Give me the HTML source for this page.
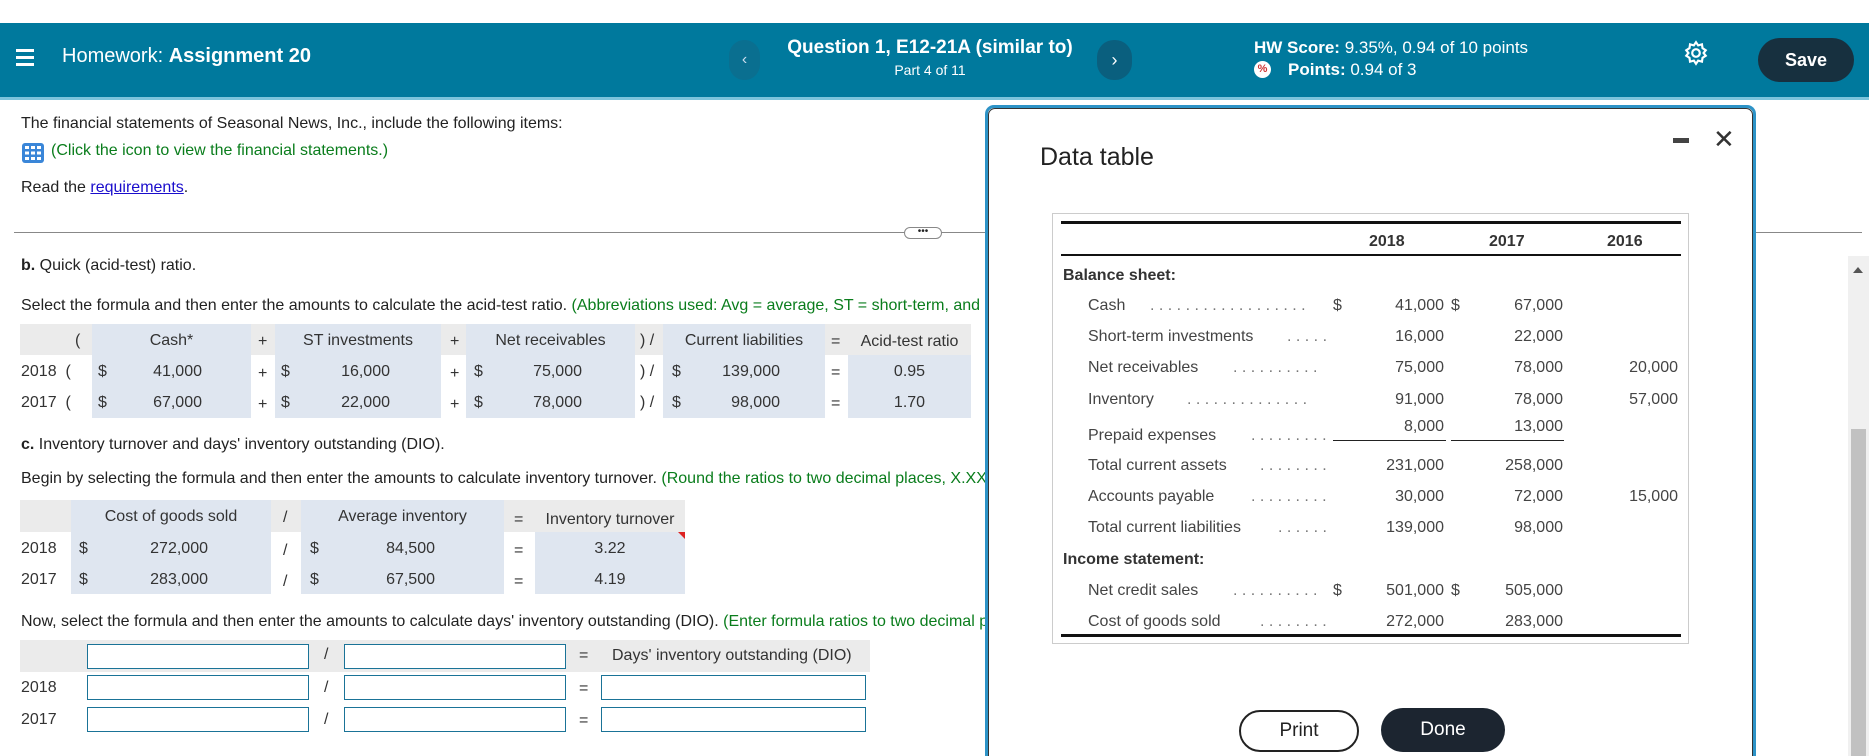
<!DOCTYPE html>
<html><head><meta charset="utf-8"><style>
*{margin:0;padding:0;box-sizing:border-box}
html,body{width:1869px;height:756px;overflow:hidden}
body{background:#fff;font-family:"Liberation Sans",Arial,sans-serif;font-size:16px;color:#222;position:relative}
.a{position:absolute;white-space:nowrap}
.g{color:#0a7d1c}
.hdr{position:absolute;left:0;top:23px;width:1869px;height:77px;background:#00799d;border-bottom:3px solid #7cc4dc;color:#fff}
.bx{position:absolute}
.gray{background:#ebebeb}
.blue{background:#dfe6f0}
.c{text-align:center}
.r{text-align:right}
.in{position:absolute;border:1px solid #1a7397;background:#fff;height:25px}
.m{font-size:16px;color:#333}
</style></head><body>
<div class="hdr">
 <div class="a" style="left:16px;top:26px;width:18px;height:3px;background:#fff"></div>
 <div class="a" style="left:16px;top:33px;width:18px;height:3px;background:#fff"></div>
 <div class="a" style="left:16px;top:40px;width:18px;height:3px;background:#fff"></div>
 <div class="a" style="left:62px;top:22px;font-size:20px">Homework: <b>Assignment 20</b></div>
 <div class="a" style="left:729px;top:17px;width:31px;height:40px;border-radius:16px;background:#0a6f90;text-align:center;line-height:40px;font-size:16px;color:#cde">‹</div>
 <div class="a c" style="left:760px;top:14px;width:340px;font-size:19px;font-weight:bold">Question 1, E12-21A (similar to)</div>
 <div class="a c" style="left:760px;top:39px;width:340px;font-size:14px">Part 4 of 11</div>
 <div class="a" style="left:1097px;top:17px;width:35px;height:40px;border-radius:17px;background:#0a5f7e;text-align:center;line-height:40px;font-size:18px">›</div>
 <div class="a" style="left:1254px;top:15px;font-size:17px"><b>HW Score:</b> 9.35%, 0.94 of 10 points</div>
 <div class="a" style="left:1254px;top:38px;width:17px;height:17px;border-radius:50%;background:#fff;color:#c33;font-size:11px;text-align:center;line-height:17px;font-weight:bold">%</div>
 <div class="a" style="left:1288px;top:37px;font-size:17px"><b>Points:</b> 0.94 of 3</div>
 <svg class="a" style="left:1683px;top:17px" width="26" height="26" viewBox="0 0 24 24" fill="none" stroke="#fff" stroke-width="2"><circle cx="12" cy="12" r="3.5"/><path d="M12 2l2 3 3.5-1 .5 3.5 3 2-2 2.5 2 2.5-3 2-.5 3.5-3.5-1-2 3-2-3-3.5 1-.5-3.5-3-2 2-2.5-2-2.5 3-2 .5-3.5 3.5 1z"/></svg>
 <div class="a c" style="left:1758px;top:15px;width:96px;height:44px;border-radius:22px;background:#17303f;line-height:44px;font-weight:bold;font-size:18px">Save</div>
</div>
<div class="a" style="left:21px;top:115px">The financial statements of Seasonal News, Inc., include the following items:</div>
<svg class="a" style="left:22px;top:143px" width="22" height="20" viewBox="0 0 22 20"><rect width="22" height="20" rx="3" fill="#3a86d8"/><g fill="#fff"><rect x="3" y="3" width="4" height="3"/><rect x="9" y="3" width="4" height="3"/><rect x="15" y="3" width="4" height="3"/><rect x="3" y="8.5" width="4" height="3"/><rect x="9" y="8.5" width="4" height="3"/><rect x="15" y="8.5" width="4" height="3"/><rect x="3" y="14" width="4" height="3"/><rect x="9" y="14" width="4" height="3"/><rect x="15" y="14" width="4" height="3"/></g></svg>
<div class="a g" style="left:51px;top:142px">(Click the icon to view the financial statements.)</div>
<div class="a" style="left:21px;top:179px">Read the <span style="color:#1a0dcc;text-decoration:underline">requirements</span>.</div>
<div class="a" style="left:14px;top:232px;width:1848px;height:1px;background:#888"></div>
<div class="a c" style="left:904px;top:227px;width:38px;height:12px;border:1px solid #888;border-radius:6px;background:#fff;font-size:10px;line-height:8px">•••</div>
<div class="a" style="left:21px;top:257px"><b>b.</b> Quick (acid-test) ratio.</div>
<div class="a" style="left:21px;top:297px">Select the formula and then enter the amounts to calculate the acid-test ratio. <span class="g">(Abbreviations used: Avg = average, ST = short-term, and</span></div>
<div class="bx gray" style="left:20px;top:324px;width:951px;height:31px"></div>
<div class="bx blue" style="left:92px;top:324px;width:159px;height:94px"></div>
<div class="bx blue" style="left:275px;top:324px;width:166px;height:94px"></div>
<div class="bx blue" style="left:466px;top:324px;width:169px;height:94px"></div>
<div class="bx blue" style="left:663px;top:324px;width:162px;height:94px"></div>
<div class="bx blue" style="left:848px;top:355px;width:123px;height:63px"></div>
<div class="a m" style="left:75px;top:332px">(</div>
<div class="a m c" style="left:92px;top:332px;width:159px">Cash*</div>
<div class="a m" style="left:258px;top:333px">+</div>
<div class="a m c" style="left:275px;top:332px;width:166px">ST investments</div>
<div class="a m" style="left:450px;top:333px">+</div>
<div class="a m c" style="left:466px;top:332px;width:169px">Net receivables</div>
<div class="a m" style="left:640px;top:332px">) /</div>
<div class="a m c" style="left:663px;top:332px;width:162px">Current liabilities</div>
<div class="a m" style="left:831px;top:333px">=</div>
<div class="a m c" style="left:848px;top:333px;width:123px">Acid-test ratio</div>
<div class="a m" style="left:21px;top:363px">2018 &nbsp;(</div>
<div class="a m" style="left:21px;top:394px">2017 &nbsp;(</div>
<div class="a m" style="left:98px;top:363px">$</div><div class="a m r" style="left:130px;top:363px;width:72px">41,000</div>
<div class="a m" style="left:98px;top:394px">$</div><div class="a m r" style="left:130px;top:394px;width:72px">67,000</div>
<div class="a m" style="left:258px;top:365px">+</div><div class="a m" style="left:258px;top:396px">+</div>
<div class="a m" style="left:281px;top:363px">$</div><div class="a m r" style="left:318px;top:363px;width:72px">16,000</div>
<div class="a m" style="left:281px;top:394px">$</div><div class="a m r" style="left:318px;top:394px;width:72px">22,000</div>
<div class="a m" style="left:450px;top:365px">+</div><div class="a m" style="left:450px;top:396px">+</div>
<div class="a m" style="left:474px;top:363px">$</div><div class="a m r" style="left:510px;top:363px;width:72px">75,000</div>
<div class="a m" style="left:474px;top:394px">$</div><div class="a m r" style="left:510px;top:394px;width:72px">78,000</div>
<div class="a m" style="left:640px;top:363px">) /</div><div class="a m" style="left:640px;top:394px">) /</div>
<div class="a m" style="left:672px;top:363px">$</div><div class="a m r" style="left:700px;top:363px;width:80px">139,000</div>
<div class="a m" style="left:672px;top:394px">$</div><div class="a m r" style="left:700px;top:394px;width:80px">98,000</div>
<div class="a m" style="left:831px;top:364px">=</div><div class="a m" style="left:831px;top:395px">=</div>
<div class="a m c" style="left:848px;top:363px;width:123px">0.95</div>
<div class="a m c" style="left:848px;top:394px;width:123px">1.70</div>
<div class="a" style="left:21px;top:436px"><b>c.</b> Inventory turnover and days' inventory outstanding (DIO).</div>
<div class="a" style="left:21px;top:470px">Begin by selecting the formula and then enter the amounts to calculate inventory turnover. <span class="g">(Round the ratios to two decimal places, X.XX.)</span></div>
<div class="bx gray" style="left:20px;top:500px;width:665px;height:32px"></div>
<div class="bx blue" style="left:71px;top:500px;width:200px;height:94px"></div>
<div class="bx blue" style="left:301px;top:500px;width:203px;height:94px"></div>
<div class="bx blue" style="left:535px;top:532px;width:150px;height:62px"></div>
<div class="a" style="left:678px;top:532px;width:0;height:0;border-left:7px solid transparent;border-top:7px solid #d22"></div>
<div class="a m c" style="left:71px;top:508px;width:200px">Cost of goods sold</div>
<div class="a m" style="left:283px;top:509px">/</div>
<div class="a m c" style="left:301px;top:508px;width:203px">Average inventory</div>
<div class="a m" style="left:514px;top:511px">=</div>
<div class="a m c" style="left:535px;top:511px;width:150px">Inventory turnover</div>
<div class="a m" style="left:21px;top:540px">2018</div><div class="a m" style="left:21px;top:571px">2017</div>
<div class="a m" style="left:79px;top:540px">$</div><div class="a m r" style="left:120px;top:540px;width:88px">272,000</div>
<div class="a m" style="left:79px;top:571px">$</div><div class="a m r" style="left:120px;top:571px;width:88px">283,000</div>
<div class="a m" style="left:283px;top:542px">/</div><div class="a m" style="left:283px;top:573px">/</div>
<div class="a m" style="left:310px;top:540px">$</div><div class="a m r" style="left:360px;top:540px;width:75px">84,500</div>
<div class="a m" style="left:310px;top:571px">$</div><div class="a m r" style="left:360px;top:571px;width:75px">67,500</div>
<div class="a m" style="left:514px;top:542px">=</div><div class="a m" style="left:514px;top:573px">=</div>
<div class="a m c" style="left:535px;top:540px;width:150px">3.22</div>
<div class="a m c" style="left:535px;top:571px;width:150px">4.19</div>
<div class="a" style="left:21px;top:613px">Now, select the formula and then enter the amounts to calculate days' inventory outstanding (DIO). <span class="g">(Enter formula ratios to two decimal places.)</span></div>
<div class="bx gray" style="left:20px;top:640px;width:850px;height:32px"></div>
<div class="in" style="left:87px;top:644px;width:222px"></div>
<div class="in" style="left:344px;top:644px;width:222px"></div>
<div class="a m" style="left:324px;top:646px">/</div>
<div class="a m" style="left:579px;top:647px">=</div>
<div class="a m" style="left:612px;top:647px">Days' inventory outstanding (DIO)</div>
<div class="a m" style="left:21px;top:679px">2018</div><div class="a m" style="left:21px;top:711px">2017</div>
<div class="in" style="left:87px;top:675px;width:222px"></div>
<div class="in" style="left:344px;top:675px;width:222px"></div>
<div class="in" style="left:601px;top:675px;width:265px"></div>
<div class="in" style="left:87px;top:707px;width:222px"></div>
<div class="in" style="left:344px;top:707px;width:222px"></div>
<div class="in" style="left:601px;top:707px;width:265px"></div>
<div class="a m" style="left:324px;top:679px">/</div><div class="a m" style="left:324px;top:711px">/</div>
<div class="a m" style="left:579px;top:680px">=</div><div class="a m" style="left:579px;top:712px">=</div>
<div class="a" style="left:1848px;top:256px;width:21px;height:500px;background:#f0f0f0"></div>
<div class="a" style="left:1851px;top:429px;width:15px;height:327px;background:#c1c1c1"></div>
<div class="a" style="left:1853px;top:267px;width:0;height:0;border-left:5px solid transparent;border-right:5px solid transparent;border-bottom:6px solid #555"></div>
<!-- modal -->
<div class="a" style="left:985px;top:105px;width:771px;height:651px;background:#fff;border:3px solid #2d93c7;border-bottom:none;border-radius:9px 9px 0 0">
 <div style="position:absolute;left:0;top:0;right:0;bottom:0;border:1px solid #333;border-bottom:none;border-radius:7px 7px 0 0"></div>
</div>
<div class="a" style="left:1040px;top:143px;font-size:25px;color:#222">Data table</div>
<div class="a" style="left:1673px;top:138px;width:16px;height:5px;background:#444"></div>
<div class="a" style="left:1713px;top:124px;font-size:26px;color:#333">✕</div>
<div class="a" style="left:1052px;top:213px;width:637px;height:431px;border:1px solid #ccc"></div>
<div class="a" style="left:1061px;top:221px;width:620px;height:3px;background:#111"></div>
<div class="a" style="left:1061px;top:254px;width:620px;height:2px;background:#111"></div>
<div class="a" style="left:1061px;top:634px;width:620px;height:3px;background:#111"></div>
<div class="a m" style="left:1369px;top:233px;font-weight:bold">2018</div>
<div class="a m" style="left:1489px;top:233px;font-weight:bold">2017</div>
<div class="a m" style="left:1607px;top:233px;font-weight:bold">2016</div>
<div class="a m" style="left:1063px;top:267px;font-weight:bold">Balance sheet:</div>
<div class="a m" style="left:1063px;top:551px;font-weight:bold">Income statement:</div>
<div class="a" style="left:1333px;top:440px;width:113px;height:1px;background:#222"></div>
<div class="a" style="left:1451px;top:440px;width:113px;height:1px;background:#222"></div>
<div style="position:absolute;left:0;top:0;font-size:16px;color:#444">
 <div class="a" style="left:1088px;top:297px">Cash</div><div class="a" style="left:1150px;top:297px;color:#777">. . . . . . . . . . . . . . . . . .</div>
 <div class="a" style="left:1088px;top:328px">Short-term investments</div><div class="a" style="left:1287px;top:328px;color:#777">. . . . .</div>
 <div class="a" style="left:1088px;top:359px">Net receivables</div><div class="a" style="left:1233px;top:359px;color:#777">. . . . . . . . . .</div>
 <div class="a" style="left:1088px;top:391px">Inventory</div><div class="a" style="left:1187px;top:391px;color:#777">. . . . . . . . . . . . . .</div>
 <div class="a" style="left:1088px;top:427px">Prepaid expenses</div><div class="a" style="left:1251px;top:427px;color:#777">. . . . . . . . .</div>
 <div class="a" style="left:1088px;top:457px">Total current assets</div><div class="a" style="left:1260px;top:457px;color:#777">. . . . . . . .</div>
 <div class="a" style="left:1088px;top:488px">Accounts payable</div><div class="a" style="left:1251px;top:488px;color:#777">. . . . . . . . .</div>
 <div class="a" style="left:1088px;top:519px">Total current liabilities</div><div class="a" style="left:1278px;top:519px;color:#777">. . . . . .</div>
 <div class="a" style="left:1088px;top:582px">Net credit sales</div><div class="a" style="left:1233px;top:582px;color:#777">. . . . . . . . . .</div>
 <div class="a" style="left:1088px;top:613px">Cost of goods sold</div><div class="a" style="left:1260px;top:613px;color:#777">. . . . . . . .</div>
 <div class="a" style="left:1333px;top:297px">$</div><div class="a" style="left:1333px;top:582px">$</div>
 <div class="a" style="left:1451px;top:297px">$</div><div class="a" style="left:1451px;top:582px">$</div>
 <div class="a r" style="left:1364px;top:297px;width:80px">41,000</div><div class="a r" style="left:1483px;top:297px;width:80px">67,000</div>
 <div class="a r" style="left:1364px;top:328px;width:80px">16,000</div><div class="a r" style="left:1483px;top:328px;width:80px">22,000</div>
 <div class="a r" style="left:1364px;top:359px;width:80px">75,000</div><div class="a r" style="left:1483px;top:359px;width:80px">78,000</div><div class="a r" style="left:1598px;top:359px;width:80px">20,000</div>
 <div class="a r" style="left:1364px;top:391px;width:80px">91,000</div><div class="a r" style="left:1483px;top:391px;width:80px">78,000</div><div class="a r" style="left:1598px;top:391px;width:80px">57,000</div>
 <div class="a r" style="left:1364px;top:418px;width:80px">8,000</div><div class="a r" style="left:1483px;top:418px;width:80px">13,000</div>
 <div class="a r" style="left:1364px;top:457px;width:80px">231,000</div><div class="a r" style="left:1483px;top:457px;width:80px">258,000</div>
 <div class="a r" style="left:1364px;top:488px;width:80px">30,000</div><div class="a r" style="left:1483px;top:488px;width:80px">72,000</div><div class="a r" style="left:1598px;top:488px;width:80px">15,000</div>
 <div class="a r" style="left:1364px;top:519px;width:80px">139,000</div><div class="a r" style="left:1483px;top:519px;width:80px">98,000</div>
 <div class="a r" style="left:1364px;top:582px;width:80px">501,000</div><div class="a r" style="left:1483px;top:582px;width:80px">505,000</div>
 <div class="a r" style="left:1364px;top:613px;width:80px">272,000</div><div class="a r" style="left:1483px;top:613px;width:80px">283,000</div>
</div>
<div class="a c" style="left:1239px;top:710px;width:120px;height:42px;border:2px solid #222;border-radius:21px;font-size:19px;line-height:38px;color:#222;background:#fff">Print</div>
<div class="a c" style="left:1381px;top:708px;width:124px;height:44px;border-radius:22px;background:#1c2530;color:#fff;font-size:19px;line-height:44px">Done</div>
</body></html>
